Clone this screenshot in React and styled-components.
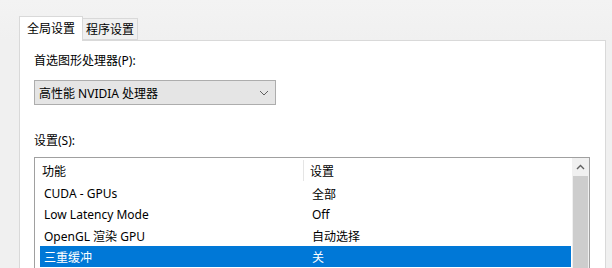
import React from 'react'
import styled, { createGlobalStyle } from 'styled-components'

const GlobalStyle = createGlobalStyle`
  html, body {
    margin: 0;
    padding: 0;
    background: #f0f0f0;
    overflow: hidden;
  }
  body {
    font-family: "Noto Sans", "Noto Sans CJK SC", sans-serif;
    font-size: 12px;
    color: #000;
  }
`

const Root = styled.div`
  box-sizing: border-box;
  width: 612px;
  height: 268px;
  padding: 16px 6px 0 19px;
  display: flex;
  flex-direction: column;
  background: linear-gradient(#f3f3f3, #f0f0f0 40px);
`

const TabBar = styled.div`
  display: flex;
  align-items: flex-end;
  height: 24px;
  position: relative;
  z-index: 1;
`

const Tab = styled.div`
  box-sizing: border-box;
  display: flex;
  align-items: center;
  justify-content: center;
  height: ${p => (p.$active ? '25px' : '22px')};
  margin-bottom: ${p => (p.$active ? '-1px' : '0')};
  padding: 0 ${p => (p.$active ? '7px' : '3px')};
  padding-top: ${p => (p.$active ? '0' : '1px')};
  background: ${p => (p.$active ? '#ffffff' : '#f0f0f0')};
  border: 1px solid #d9d9d9;
  border-bottom: ${p => (p.$active ? 'none' : '1px solid #d9d9d9')};
  border-left: ${p => (p.$active ? '1px solid #d9d9d9' : 'none')};
  line-height: 1;
`

const Panel = styled.div`
  box-sizing: border-box;
  flex: 1;
  background: #ffffff;
  border: 1px solid #d9d9d9;
  border-bottom: none;
  padding: 11px 15px 0 14px;
  display: flex;
  flex-direction: column;
`

const Label = styled.div`
  height: 17px;
  line-height: 17px;
  margin-bottom: ${p => p.$gap || 0}px;
`

const Select = styled.div`
  box-sizing: border-box;
  width: 242px;
  height: 25px;
  background: #e5e5e5;
  border: 1px solid #adadad;
  display: flex;
  align-items: center;
  justify-content: space-between;
  padding: 0 6px 0 4px;
  margin-bottom: 27px;
`

const ListBox = styled.div`
  box-sizing: border-box;
  flex: 1;
  border: 1px solid #a0a0a0;
  border-bottom: none;
  display: flex;
`

const ListBody = styled.div`
  flex: 1;
  padding-left: 5px;
  display: flex;
  flex-direction: column;
`

const Row = styled.div`
  display: grid;
  grid-template-columns: 263px 1fr;
  height: ${p => (p.$header ? '25px' : '21px')};
  align-items: center;
  background: ${p => (p.$selected ? '#0078d7' : 'transparent')};
  color: ${p => (p.$selected ? '#ffffff' : '#000000')};
`

const Cell = styled.div`
  padding-left: ${p => (p.$second ? '9px' : '4px')};
  white-space: nowrap;
`

const HeaderCell = styled.div`
  height: 21px;
  align-self: start;
  display: flex;
  align-items: center;
  padding-left: ${p => (p.$first ? '2px' : '6px')};
  border-left: ${p => (p.$first ? 'none' : '1px solid #e5e5e5')};
  margin-top: 2px;
`

const ScrollBar = styled.div`
  width: 17px;
  display: flex;
  flex-direction: column;
  background: #f0f0f0;
  margin-left: 1px;
`

const ScrollButton = styled.div`
  height: 18px;
  display: flex;
  align-items: center;
  justify-content: center;
  background: #f0f0f0;
`

const Thumb = styled.div`
  flex: 1;
  background: #cdcdcd;
  margin: 0 1px;
`

const rows = [
  ['CUDA - GPUs', '全部'],
  ['Low Latency Mode', 'Off'],
  ['OpenGL 渲染 GPU', '自动选择'],
  ['三重缓冲', '关'],
]

function Chevron() {
  return (
    <svg width="10" height="6" viewBox="0 0 10 6">
      <path d="M1 1 L5 5 L9 1" fill="none" stroke="#606060" strokeWidth="1" />
    </svg>
  )
}

function UpArrow() {
  return (
    <svg width="9" height="6" viewBox="0 0 9 6">
      <path d="M1 5 L4.5 1.5 L8 5" fill="none" stroke="#606060" strokeWidth="1.4" />
    </svg>
  )
}

export default function App() {
  return (
    <>
      <GlobalStyle />
      <Root>
        <TabBar>
          <Tab $active>全局设置</Tab>
          <Tab>程序设置</Tab>
        </TabBar>
        <Panel>
          <Label $gap={11}>首选图形处理器(P):</Label>
          <Select>
            <span>高性能 NVIDIA 处理器</span>
            <Chevron />
          </Select>
          <Label $gap={8}>设置(S):</Label>
          <ListBox>
            <ListBody>
              <Row $header>
                <HeaderCell $first>功能</HeaderCell>
                <HeaderCell>设置</HeaderCell>
              </Row>
              {rows.map(([name, value], i) => (
                <Row key={name} $selected={i === rows.length - 1}>
                  <Cell>{name}</Cell>
                  <Cell $second>{value}</Cell>
                </Row>
              ))}
            </ListBody>
            <ScrollBar>
              <ScrollButton>
                <UpArrow />
              </ScrollButton>
              <Thumb />
            </ScrollBar>
          </ListBox>
        </Panel>
      </Root>
    </>
  )
}
